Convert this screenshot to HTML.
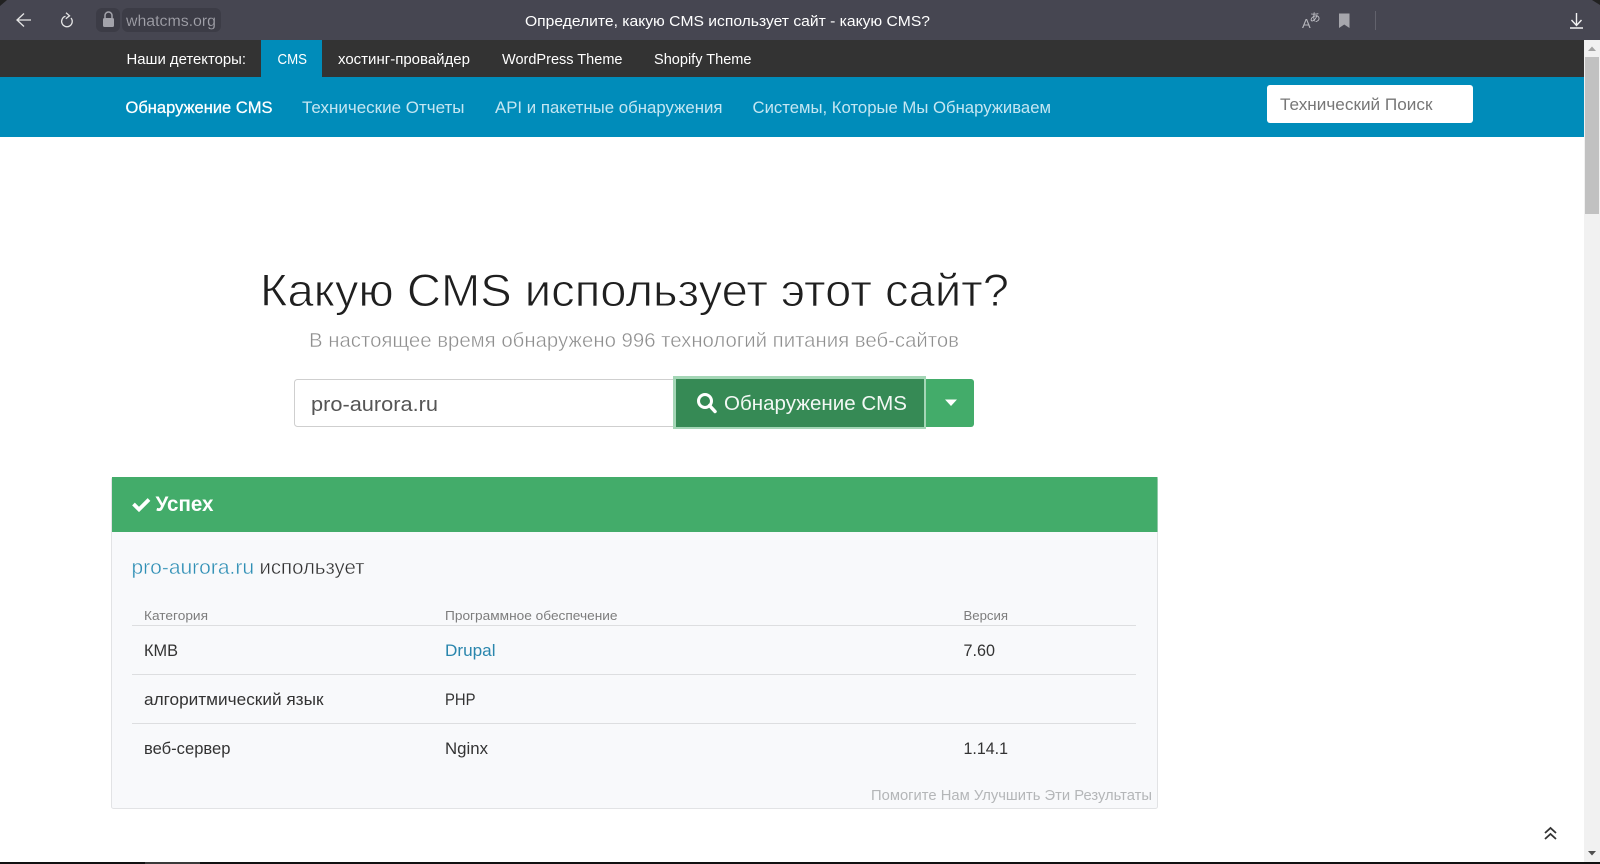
<!DOCTYPE html>
<html lang="ru"><head><meta charset="utf-8"><title>Какую CMS использует этот сайт?</title>
<style>
html,body{margin:0;padding:0;width:1600px;height:864px;overflow:hidden;background:#fff}
svg{display:block;position:absolute;left:0;top:0}
text{font-family:"Liberation Sans","DejaVu Sans",sans-serif}
</style></head><body>
<svg width="1600" height="864" viewBox="0 0 1600 864" xmlns="http://www.w3.org/2000/svg">
<rect width="1600" height="864" fill="#fff"/>
<!-- browser bar -->
<rect width="1600" height="40" fill="#464651"/>
<path d="M0 0H7L0 6Z" fill="#222"/>
<path d="M1600 0H1592L1600 5Z" fill="#222"/>
<path d="M31 20H17M24 13.500L17 20L24 26.500" fill="none" stroke="#e6e6e6" stroke-width="1.300"/>
<path d="M71 18A5.300 5.300 0 1 1 65.500 16.300M66 12.800L69.500 15.800L65.800 18.800" fill="none" stroke="#e6e6e6" stroke-width="1.300"/>
<rect x="96" y="8" width="24" height="24" rx="6" fill="#3c3c46"/>
<rect x="122" y="8" width="99" height="24" rx="6" fill="#3c3c46"/>
<rect x="103" y="18" width="11" height="9" rx="1.500" fill="#a3a3ab"/>
<path d="M105 18V15.500A3.500 3.500 0 0 1 112 15.500V18" fill="none" stroke="#a3a3ab" stroke-width="1.500"/>
<text x="126" y="26" font-size="15.500" fill="#a4a4ac" stroke="#3c3c46" stroke-width=".15" textLength="90" lengthAdjust="spacingAndGlyphs">whatcms.org</text>
<text x="525" y="26" font-size="15" fill="#fff" textLength="405" lengthAdjust="spacingAndGlyphs">Определите, какую CMS использует сайт - какую CMS?</text>
<text x="1302" y="28" font-size="13" fill="#b5b5bb">A</text>
<text x="1309.500" y="21" font-size="11" fill="#c5c5cb" style="font-family:'Noto Sans CJK JP',sans-serif">あ</text>
<path d="M1339 13.500H1349.500V28L1344.250 24.500L1339 28Z" fill="#a6a6ac"/>
<rect x="1375" y="11" width="1" height="19" fill="#62626c"/>
<path d="M1576.500 13V25M1571.500 20L1576.500 25.500L1581.500 20M1570 28H1583" fill="none" stroke="#f2f2f2" stroke-width="1.400"/>
<!-- top bar -->
<rect y="40" width="1584" height="37" fill="#333"/>
<rect x="261" y="40" width="61" height="37" fill="#008cba"/>
<g font-size="14.500" fill="#fff">
<text x="126.500" y="64" textLength="119.500" lengthAdjust="spacingAndGlyphs">Наши детекторы:</text>
<text x="277.500" y="64" textLength="29.500" lengthAdjust="spacingAndGlyphs">CMS</text>
<text x="338" y="64" textLength="132" lengthAdjust="spacingAndGlyphs">хостинг-провайдер</text>
<text x="502" y="64" textLength="120.500" lengthAdjust="spacingAndGlyphs">WordPress Theme</text>
<text x="654" y="64" textLength="97.500" lengthAdjust="spacingAndGlyphs">Shopify Theme</text>
</g>
<!-- blue nav -->
<rect y="77" width="1584" height="60" fill="#008cba"/>
<g font-size="16.500" fill="#c4e6f2">
<text x="125.500" y="113" fill="#fff" stroke="#fff" stroke-width=".25" textLength="147" lengthAdjust="spacingAndGlyphs">Обнаружение CMS</text>
<text x="302" y="113" textLength="162.500" lengthAdjust="spacingAndGlyphs">Технические Отчеты</text>
<text x="495" y="113" textLength="227.500" lengthAdjust="spacingAndGlyphs">API и пакетные обнаружения</text>
<text x="752.500" y="113" textLength="298.500" lengthAdjust="spacingAndGlyphs">Системы, Которые Мы Обнаруживаем</text>
</g>
<rect x="1267" y="85" width="206" height="38" rx="3" fill="#fff"/>
<text x="1280" y="110" font-size="16.500" fill="#777" textLength="152.500" lengthAdjust="spacingAndGlyphs">Технический Поиск</text>
<!-- scrollbar -->
<rect x="1584" y="40" width="16" height="822" fill="#f1f1f1"/>
<rect x="1585" y="57" width="14" height="157" fill="#c1c1c1"/>
<path d="M1592 46.500L1596 51H1588Z" fill="#a3a3a3"/>
<path d="M1592 855.500L1596 851H1588Z" fill="#505050"/>
<!-- heading -->
<text x="260" y="306" font-size="45" fill="#1f1f1f" stroke="#fff" stroke-width=".9" textLength="749" lengthAdjust="spacingAndGlyphs">Какую CMS использует этот сайт?</text>
<text x="309" y="347" font-size="20.500" fill="#8f8f8f" stroke="#fff" stroke-width=".4" textLength="650" lengthAdjust="spacingAndGlyphs">В настоящее время обнаружено 996 технологий питания веб-сайтов</text>
<!-- search -->
<rect x="294.500" y="379.500" width="386" height="47" rx="3" fill="#fff" stroke="#cfcfcf"/>
<text x="311" y="411" font-size="20.500" fill="#555" textLength="127" lengthAdjust="spacingAndGlyphs">pro-aurora.ru</text>
<path d="M920 379H971A3 3 0 0 1 974 382V424A3 3 0 0 1 971 427H920Z" fill="#43ac6a"/>
<rect x="673" y="376" width="253" height="53" fill="#a4d6b6"/>
<rect x="676" y="379" width="248" height="48" fill="#368a55"/>
<circle cx="705" cy="401" r="6.500" fill="none" stroke="#fff" stroke-width="3"/>
<path d="M709.500 405.500L715 411.500" stroke="#fff" stroke-width="3.500" stroke-linecap="round"/>
<text x="724" y="410" font-size="20.500" fill="#f2f8f4" textLength="183" lengthAdjust="spacingAndGlyphs">Обнаружение CMS</text>
<path d="M945 399.500H957L951 406Z" fill="#fff"/>
<!-- panel -->
<rect x="111.500" y="477.500" width="1046" height="331" rx="2" fill="#f8f9fb" stroke="#e2e3e5"/>
<rect x="112" y="477" width="1045.500" height="55" fill="#43ac6a"/>
<path d="M133.500 504L139 509.500L149 499.500" fill="none" stroke="#fff" stroke-width="3.800"/>
<text x="155.500" y="511" font-size="21" font-weight="700" fill="#fff" textLength="58" lengthAdjust="spacingAndGlyphs">Успех</text>
<text x="131.500" y="574" font-size="20.500" fill="#2f8fb5" stroke="#f8f9fb" stroke-width=".4" textLength="122.500" lengthAdjust="spacingAndGlyphs">pro-aurora.ru</text>
<text x="259.500" y="574" font-size="20.500" fill="#333" stroke="#f8f9fb" stroke-width=".4" textLength="105" lengthAdjust="spacingAndGlyphs">использует</text>
<g font-size="13" fill="#7d7d7d">
<text x="144" y="620" textLength="64" lengthAdjust="spacingAndGlyphs">Категория</text>
<text x="445" y="620" textLength="172.500" lengthAdjust="spacingAndGlyphs">Программное обеспечение</text>
<text x="963.500" y="620" textLength="44.500" lengthAdjust="spacingAndGlyphs">Версия</text>
</g>
<g fill="#dddee0">
<rect x="132" y="625" width="1004" height="1"/>
<rect x="132" y="674" width="1004" height="1"/>
<rect x="132" y="723" width="1004" height="1"/>
</g>
<g font-size="16.500" fill="#333">
<text x="144" y="656" textLength="34" lengthAdjust="spacingAndGlyphs">КМВ</text>
<text x="445" y="656" fill="#2a86ad" textLength="50.500" lengthAdjust="spacingAndGlyphs">Drupal</text>
<text x="963.500" y="656" textLength="31.500" lengthAdjust="spacingAndGlyphs">7.60</text>
<text x="144" y="705" textLength="179.500" lengthAdjust="spacingAndGlyphs">алгоритмический язык</text>
<text x="445" y="705" textLength="30.500" lengthAdjust="spacingAndGlyphs">PHP</text>
<text x="144" y="754" textLength="86.500" lengthAdjust="spacingAndGlyphs">веб-сервер</text>
<text x="445" y="754" textLength="43" lengthAdjust="spacingAndGlyphs">Nginx</text>
<text x="963.500" y="754" textLength="44.500" lengthAdjust="spacingAndGlyphs">1.14.1</text>
</g>
<text x="871" y="800" font-size="14.500" fill="#b4b6b8" textLength="281" lengthAdjust="spacingAndGlyphs">Помогите Нам Улучшить Эти Результаты</text>
<!-- to top -->
<path d="M1545 833L1550.500 828L1556 833M1545 839L1550.500 834L1556 839" fill="none" stroke="#333" stroke-width="1.800"/>
<!-- bottom edge -->
<rect y="862" width="1600" height="2" fill="#111"/>
<rect x="145" y="862" width="55" height="2" fill="#3a3a3a"/>
</svg>
</body></html>
